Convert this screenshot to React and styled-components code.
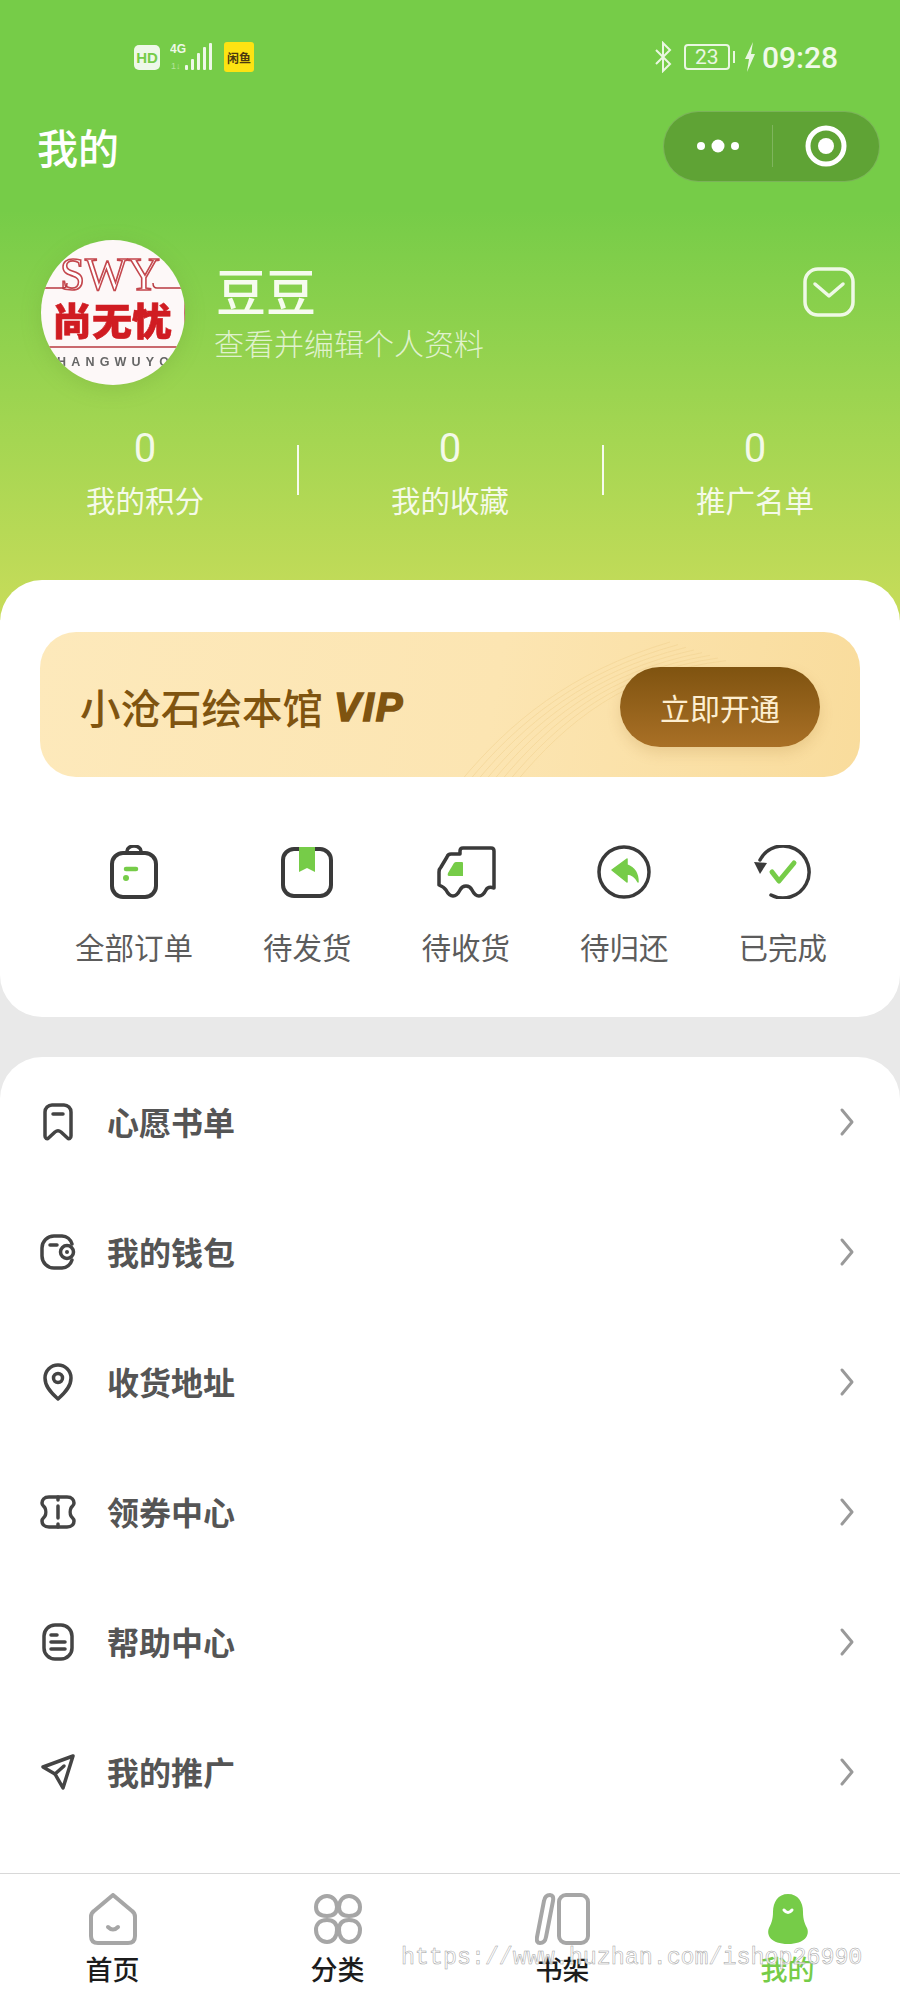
import React from "react";
import styled, { createGlobalStyle } from "styled-components";

const Global = createGlobalStyle`
  html, body { margin: 0; padding: 0; background: #e9e9e9; }
  * { box-sizing: border-box; }
  body { font-family: "Noto Sans CJK SC", "Noto Sans", sans-serif; }
`;
const Page = styled.div`position: relative; width: 900px; height: 2000px; overflow: hidden; background: #e9e9e9;`;
const Hero = styled.header`
  height: 620px; color: #fff;
  background: linear-gradient(180deg, #76cc48 0, #76cc48 210px, #a5d652 440px, #c8dc5a 620px);
`;
const StatusBar = styled.div`
  height: 90px; padding: 24px 62px 0 134px; display: flex; align-items: center; justify-content: space-between;
`;
const StatusGroup = styled.div`display: flex; align-items: center; gap: ${p => p.$gap || 8}px;`;
const HdTag = styled.span`
  width: 26px; height: 25px; border-radius: 5px; background: #eef8e8; color: #76cc48;
  font: 700 15px "Liberation Sans", sans-serif; display: flex; align-items: center; justify-content: center;
`;
const FishTag = styled.span`
  width: 30px; height: 30px; border-radius: 3px; background: #fde312; color: #4a3a10;
  font: 700 12px "Noto Sans CJK SC", sans-serif; display: flex; align-items: center; justify-content: center; white-space: nowrap; overflow: hidden;
`;
const Battery = styled.span`
  width: 46px; height: 26px; border: 2px solid #eaf7e2; border-radius: 4px; margin-right: 5px; position: relative;
  font: 400 21px "Roboto", sans-serif; color: #eaf7e2; display: flex; align-items: center; justify-content: center;
  &::after { content: ""; position: absolute; right: -7px; top: 5px; width: 2px; height: 12px; background: #eaf7e2; }
`;
const Clock = styled.span`font: 500 30px "Roboto", sans-serif; color: #f0fae9;`;
const NavBar = styled.div`height: 112px; padding: 0 20px 0 37px; display: flex; align-items: center; justify-content: space-between;`;
const Title = styled.h1`margin: 0; font-size: 41px; line-height: 50px; font-weight: 500; color: #fff;`;
const Capsule = styled.div`
  width: 217px; height: 71px; border-radius: 36px; background: #5fa335; border: 1px solid rgba(255,255,255,.18);
  display: grid; grid-template-columns: 108px 1px 1fr; align-items: center; justify-items: center;
`;
const CapsuleRule = styled.span`width: 1px; height: 42px; background: rgba(255,255,255,.2);`;
const Profile = styled.section`margin-top: 38px; height: 145px; padding: 0 45px 0 41px; display: flex; align-items: flex-start;`;
const AvatarFrame = styled.div`width: 144px; height: 145px; flex: none; filter: drop-shadow(0 4px 10px rgba(90,130,40,.18));`;
const ProfileText = styled.div`margin-left: 31px; flex: 1; padding-top: 21px;`;
const Name = styled.div`font-size: 50px; line-height: 56px; font-weight: 500; color: #f6fbef;`;
const Sub = styled.div`margin-top: 7px; margin-left: -2px; font-size: 30px; line-height: 36px; font-weight: 300; color: rgba(255,255,255,.72);`;
const MailBtn = styled.div`margin-top: 27px; width: 52px; height: 50px; flex: none;`;
const Stats = styled.div`margin-top: 41px; display: flex; justify-content: space-between; align-items: flex-start;`;
const Stat = styled.div`width: 290px; text-align: center; color: rgba(255,255,255,.88);`;
const StatNum = styled.div`font: 400 40px/46px "Roboto", sans-serif;`;
const StatLabel = styled.div`margin-top: 9px; font-size: 29.5px; line-height: 36px; font-weight: 400;`;
const StatRule = styled.span`width: 2px; height: 50px; margin-top: 19px; background: rgba(255,255,255,.9); flex: none;`;

const OrderCard = styled.section`
  position: relative; margin-top: -40px; height: 437px; padding-top: 52px; background: #fff; border-radius: 42px;
`;
const Banner = styled.div`
  position: relative; overflow: hidden; margin: 0 40px; height: 145px; border-radius: 36px; padding: 5px 40px 0;
  background: linear-gradient(100deg, #fde9bb 0%, #fce5b2 55%, #f9dc9c 100%);
  display: flex; align-items: center; justify-content: space-between;
`;
const Waves = styled.svg`position: absolute; left: 400px; top: 0; width: 300px; height: 145px;`;
const BannerTitle = styled.div`
  position: relative; display: flex; align-items: center; gap: 11px; color: #7f5410; font-size: 40.5px; line-height: 50px; font-weight: 500;
`;
const Vip = styled.span`font: italic 900 40px "Liberation Sans", sans-serif; letter-spacing: 2px; color: #7f5410; -webkit-text-stroke: 1.6px #7f5410;`;
const OpenBtn = styled.div`
  position: relative; width: 200px; height: 80px; border-radius: 40px; color: #fdeed0; font-size: 30px; font-weight: 400;
  display: flex; align-items: center; justify-content: center;
  background: linear-gradient(180deg, #7f5310, #a97026); box-shadow: 0 6px 14px rgba(160,110,40,.18);
`;
const Orders = styled.div`margin-top: 68px; padding-left: 75px; display: flex; gap: 70px;`;
const OrderItem = styled.div`display: flex; flex-direction: column; align-items: center;`;
const OrderIcon = styled.svg`width: 60px; height: 54px; display: block;`;
const OrderLabel = styled.div`margin-top: 29px; font-size: 29.5px; line-height: 36px; color: #5c5c5c; font-weight: 400;`;

const MenuCard = styled.section`margin-top: 40px; height: 816px; background: #fff; border-radius: 42px 42px 0 0;`;
const Row = styled.div`height: 130px; padding: 0 44px 0 38px; display: flex; align-items: center;`;
const RowIcon = styled.svg`width: 40px; height: 40px; flex: none;`;
const RowLabel = styled.div`margin: 0 0 2px 29px; flex: 1; font-size: 32px; line-height: 40px; font-weight: 700; color: #555;`;
const Chev = styled.svg`width: 18px; height: 30px; flex: none;`;

const TabBar = styled.nav`height: 127px; background: #fff; border-top: 1px solid #d8d8d8; display: grid; grid-template-columns: repeat(4, 1fr);`;
const Tab = styled.div`display: flex; flex-direction: column; align-items: center; padding-top: 19px;`;
const TabIcon = styled.svg`width: 56px; height: 52px; display: block;`;
const TabLabel = styled.div`margin-top: 6px; font-size: 27px; line-height: 36px; font-weight: 500; color: ${p => (p.$active ? "#76cc48" : "#1c1c1c")};`;
const Watermark = styled.div`
  position: absolute; left: 401px; top: 1944px; font: 400 23.3px/28px "Liberation Mono", monospace; color: rgba(255,255,255,.8);
  -webkit-text-stroke: .5px #a0a0a0; white-space: nowrap; pointer-events: none;
`;

const G = "#76cc48";
const K = "#3a3a3a";

const Avatar = () => (
  <svg viewBox="0 0 144 145" width="144" height="145">
    <defs><clipPath id="av"><ellipse cx="72" cy="72.5" rx="72" ry="72.500" /></clipPath></defs>
    <g clipPath="url(#av)">
      <rect width="144" height="145" fill="#fdf8f8" />
      <text x="69" y="50" textAnchor="middle" fontFamily="Liberation Serif" fontSize="46" fill="#fff" stroke="#c4474d" strokeWidth="1.600" textLength="100" lengthAdjust="spacingAndGlyphs">SWY</text>
      <path d="M0 48h22q4 0 4-5M112 43q0 5 4 5h24q4 0 4 4v51q0 4-4 4H0" fill="none" stroke="#b83a40" strokeWidth="1.500" />
      <text x="71" y="95" textAnchor="middle" fontFamily="Noto Sans CJK SC" fontWeight="900" fontSize="38" fill="#d01c22" stroke="#d01c22" strokeWidth=".6" textLength="120" lengthAdjust="spacingAndGlyphs">尚无忧</text>
      <text x="72" y="126" textAnchor="middle" fontFamily="Liberation Sans" fontWeight="700" fontSize="12.500" fill="#666" textLength="112">HANGWUYO</text>
    </g>
  </svg>
);

const rows = [
  ["心愿书单", <g key="a"><path d="M7 10a7 7 0 0 1 7-7h12a7 7 0 0 1 7 7v24c0 2.500-2 3.500-3.500 2L23 30q-3-2.500-6 0l-6.500 6C9 37.500 7 36.500 7 34z" /><path d="M15 12h10" /></g>],
  ["我的钱包", <g key="b"><path d="M34 12a11 11 0 0 0-10-8h-8A12 12 0 0 0 4 16v8a12 12 0 0 0 12 12h8a11 11 0 0 0 10-8" /><path d="M12 13h7" /><circle cx="29" cy="20" r="6.500" /><circle cx="29" cy="20" r="2" fill="#444" stroke="none" /></g>],
  ["收货地址", <g key="c"><path d="M20 37C12 30 7 24 7 16a13 13 0 0 1 26 0c0 8-5 14-13 21z" /><circle cx="20" cy="16" r="4.500" /></g>],
  ["领券中心", <g key="d"><path d="M11 5h18c5 0 7 3 7 6 0 3-2 3-3 5-1 2-1 6 0 8 1 2 3 2 3 5 0 3-2 6-7 6H11c-5 0-7-3-7-6 0-3 2-3 3-5 1-2 1-6 0-8-1-2-3-2-3-5 0-3 2-6 7-6z" /><path d="M20 5v3M20 14v12M20 32v3" /></g>],
  ["帮助中心", <g key="e"><rect x="6" y="3" width="28" height="34" rx="11" /><path d="M13 13h6M13 20h14M13 27h14" /></g>],
  ["我的推广", <g key="f"><path d="M35 4L5 15l12 7 8 14z" strokeLinejoin="round" /><path d="M17 22l9-8" /></g>],
];

const RowGlyph = ({ children }) => (
  <RowIcon viewBox="0 0 40 40" fill="none" stroke="#444" strokeWidth="3.500" strokeLinecap="round" strokeLinejoin="round">{children}</RowIcon>
);

const orders = [
  ["全部订单", <g key="a"><path d="M23 8V6a7 5 0 0 1 14 0v2" fill="none" stroke={K} strokeWidth="3.500" /><rect x="8" y="8" width="44" height="44" rx="11" fill="none" stroke={K} strokeWidth="4" /><path d="M22 24h10" stroke={G} strokeWidth="4.500" strokeLinecap="round" /><circle cx="22" cy="33" r="3" fill={G} /></g>],
  ["待发货", <g key="b"><rect x="6" y="4" width="48" height="47" rx="11" fill="none" stroke={K} strokeWidth="4" /><path d="M22 2h16v25l-8-4-8 4z" fill={G} /></g>],
  ["待收货", <g key="c"><path d="M24 9V6q0-3 3-3h28q3 0 3 3v37q-6-2-8 2-3 6-7 6t-7-6q-2-4-6-4t-6 4q-3 6-7 6t-7-6q-2-3-7-5V27q0-3 2-5l6-10q1-3 4-3z" fill="none" stroke={K} strokeWidth="3.500" strokeLinejoin="round" /><path d="M20 17h6q1 0 1 1v13H13q-2 0-1-3l6-10q1-1 2-1z" fill={G} /></g>],
  ["待归还", <g key="d"><circle cx="30" cy="27" r="25" fill="none" stroke={K} strokeWidth="3.500" /><path d="M18 25L33 14v6q11 4 11 17-4-8-11-8v8z" fill={G} stroke={G} strokeWidth="1.500" strokeLinejoin="round" /></g>],
  ["已完成", <g key="e"><path d="M7 15A26 26 0 1 1 18 50" fill="none" stroke={K} strokeWidth="3.500" strokeLinecap="round" /><path d="M1 17l13 1-7 11z" fill={K} /><path d="M19 27l7 9 15-18" fill="none" stroke={G} strokeWidth="5" strokeLinecap="round" strokeLinejoin="round" /></g>],
];

const GRAY = "#a6a6a6";
const tabs = [
  ["首页", <g key="a" fill="none" stroke={GRAY} strokeWidth="4" strokeLinejoin="round"><path d="M28 2L47 18q3 2 3 6v19q0 7-7 7H13q-7 0-7-7V24q0-4 3-6z" /><path d="M23 34q5 5 10 0" strokeLinecap="round" /></g>],
  ["分类", <g key="b" fill="none" stroke={GRAY} strokeWidth="4"><path d="M17 3c6 0 10 5 10 11 0 5-2 9-10 9S6 19 6 14c0-6 5-11 11-11z" /><path d="M39 3c6 0 11 5 11 11 0 5-3 9-11 9s-10-4-10-9c0-6 4-11 10-11z" /><path d="M17 27c8 0 10 5 10 10 0 7-4 12-10 12S6 44 6 37c0-5 3-10 11-10z" /><path d="M39 27c8 0 11 5 11 10 0 7-5 12-11 12s-10-5-10-12c0-5 2-10 10-10z" /></g>],
  ["书架", <g key="c" fill="none" stroke={GRAY} strokeWidth="4"><rect x="24" y="2" width="29" height="48" rx="7" /><path d="M9 8q1-6 6-6 4 0 3 6L11 44q-1 6-6 6-4 0-3-6z" /></g>],
  ["我的", <g key="d"><path d="M28 1c10 0 15 8 15 18 0 8 2 12 4 16 3 7-2 16-19 16S6 42 9 35c2-4 4-8 4-16C13 9 18 1 28 1z" fill={G} /><path d="M24 17q4 5 8 0" fill="none" stroke="#fff" strokeWidth="3" strokeLinecap="round" /></g>],
];

export default function App() {
  return (
    <Page>
      <Global />
      <Hero>
        <StatusBar>
          <StatusGroup $gap={10}>
            <HdTag>HD</HdTag>
            <svg width="44" height="30" viewBox="0 0 44 30">
              <text x="0" y="11" fontFamily="Liberation Sans" fontWeight="700" fontSize="12" fill="#eef8e8">4G</text>
              <text x="1" y="27" fontFamily="Liberation Sans" fontSize="9" fill="#b6e39e">1↓</text>
              <g fill="#eef8e8"><rect x="15" y="23" width="3" height="5" rx="1" /><rect x="21" y="17" width="3" height="11" rx="1" /><rect x="27" y="11" width="3" height="17" rx="1" /><rect x="33" y="5" width="3" height="23" rx="1" /><rect x="39" y="1" width="3" height="27" rx="1" /></g>
            </svg>
            <FishTag>闲鱼</FishTag>
          </StatusGroup>
          <StatusGroup $gap={12}>
            <svg width="18" height="32" viewBox="0 0 18 32" fill="none" stroke="#eaf7e2" strokeWidth="2"><path d="M2 9l14 14-7 7V2l7 7L2 23" /></svg>
            <Battery>23</Battery>
            <svg width="12" height="30" viewBox="0 0 12 30" style={{ marginLeft: -3, marginRight: -6 }}><path d="M9 0L1 17h4L3 30l8-18H7z" fill="#eaf7e2" /></svg>
            <Clock>09:28</Clock>
          </StatusGroup>
        </StatusBar>
        <NavBar>
          <Title>我的</Title>
          <Capsule>
            <svg width="44" height="14" viewBox="0 0 44 14" fill="#fff"><circle cx="5" cy="7" r="4" /><circle cx="22" cy="7" r="6.500" /><circle cx="39" cy="7" r="4" /></svg>
            <CapsuleRule />
            <svg width="42" height="42" viewBox="0 0 42 42"><circle cx="21" cy="21" r="18" fill="none" stroke="#fff" strokeWidth="5" /><circle cx="21" cy="21" r="8" fill="#fff" /></svg>
          </Capsule>
        </NavBar>
        <Profile>
          <AvatarFrame><Avatar /></AvatarFrame>
          <ProfileText>
            <Name>豆豆</Name>
            <Sub>查看并编辑个人资料</Sub>
          </ProfileText>
          <MailBtn>
            <svg width="52" height="50" viewBox="0 0 52 50" fill="none" stroke="#eff9e6" strokeWidth="3.500" strokeLinecap="round" strokeLinejoin="round"><rect x="2" y="2" width="48" height="46" rx="13" /><path d="M12 17l14 12 14-12" /></svg>
          </MailBtn>
        </Profile>
        <Stats>
          <Stat><StatNum>0</StatNum><StatLabel>我的积分</StatLabel></Stat>
          <StatRule />
          <Stat><StatNum>0</StatNum><StatLabel>我的收藏</StatLabel></Stat>
          <StatRule />
          <Stat><StatNum>0</StatNum><StatLabel>推广名单</StatLabel></Stat>
        </Stats>
      </Hero>

      <OrderCard>
        <Banner>
          <Waves viewBox="0 0 300 145" fill="none" stroke="#f3d596" strokeWidth="1" opacity=".7">
            {[0, 8, 16, 24, 32, 40, 48, 56].map(d => (
              <path key={d} d={`M${20 + d} 150C${70 + d} 90 ${130 + d} 40 ${230 + d} ${10 + d / 3}`} />
            ))}
          </Waves>
          <BannerTitle>小沧石绘本馆<Vip>VIP</Vip></BannerTitle>
          <OpenBtn>立即开通</OpenBtn>
        </Banner>
        <Orders>
          {orders.map(([label, glyph]) => (
            <OrderItem key={label}>
              <OrderIcon viewBox="0 0 60 54">{glyph}</OrderIcon>
              <OrderLabel>{label}</OrderLabel>
            </OrderItem>
          ))}
        </Orders>
      </OrderCard>

      <MenuCard>
        {rows.map(([label, glyph]) => (
          <Row key={label}>
            <RowGlyph>{glyph}</RowGlyph>
            <RowLabel>{label}</RowLabel>
            <Chev viewBox="0 0 18 30" fill="none" stroke="#999" strokeWidth="3" strokeLinecap="round" strokeLinejoin="round"><path d="M4 3l10 12L4 27" /></Chev>
          </Row>
        ))}
      </MenuCard>

      <TabBar>
        {tabs.map(([label, glyph], i) => (
          <Tab key={label}>
            <TabIcon viewBox="0 0 56 52">{glyph}</TabIcon>
            <TabLabel $active={i === 3}>{label}</TabLabel>
          </Tab>
        ))}
      </TabBar>
      <Watermark>https://www.huzhan.com/ishop26990</Watermark>
    </Page>
  );
}
